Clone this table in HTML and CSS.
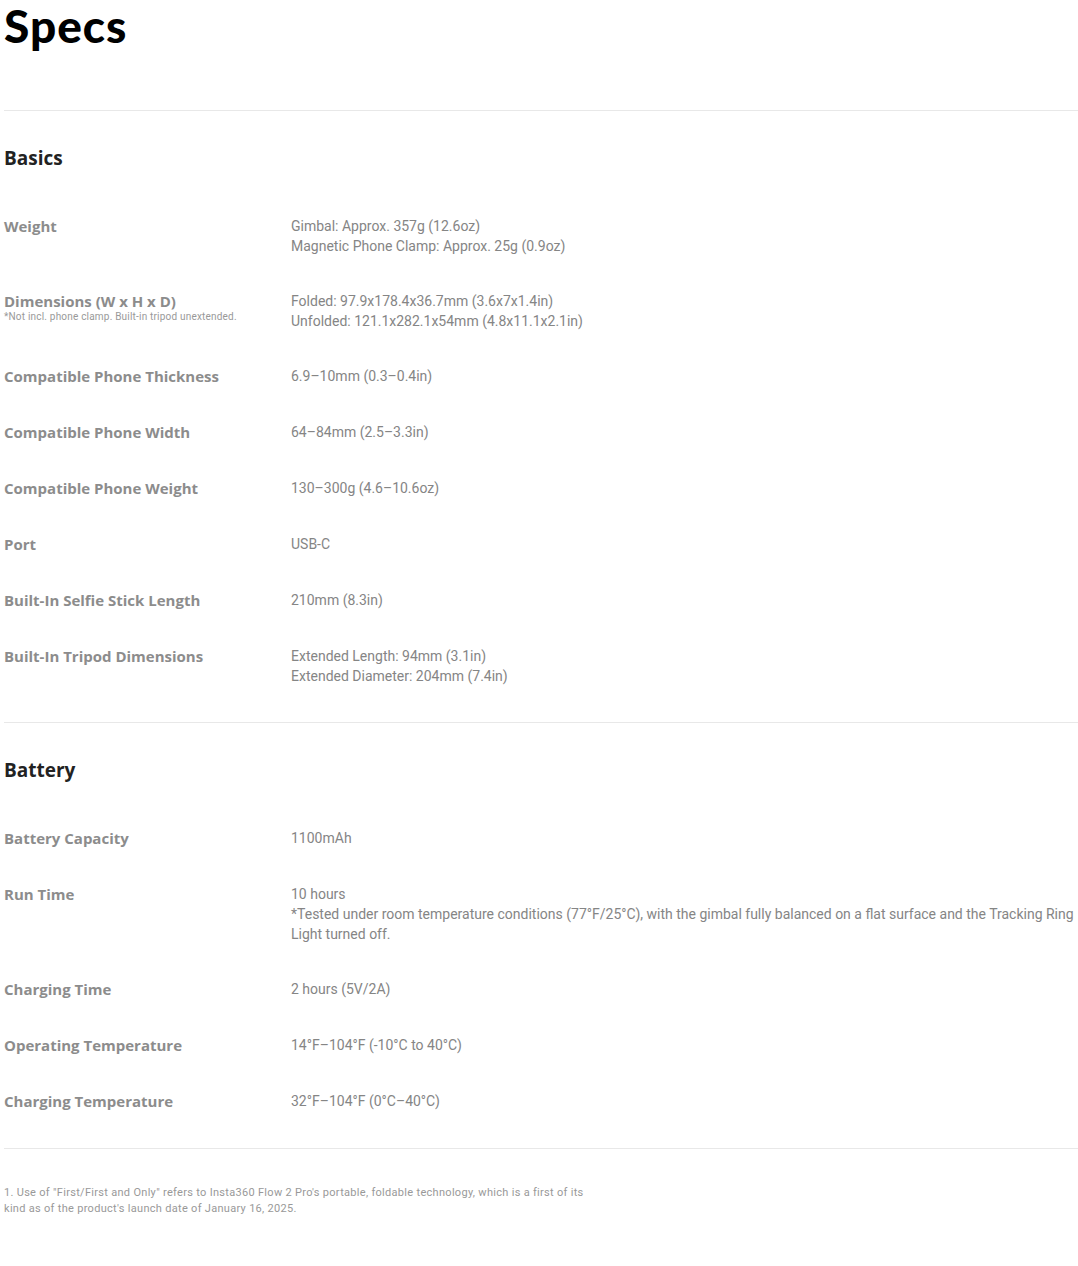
FILE: index.html
```html
<!DOCTYPE html>
<html lang="en">
<head>
  <meta charset="UTF-8">
  <meta name="viewport" content="width=device-width, initial-scale=1.0">
  <title>Specs</title>
  <link rel="stylesheet" href="styles.css">
</head>
<body>
  <div class="specs">
    <h1>Specs</h1>

    <div class="spec-section">
      <h3>Basics</h3>
      <div class="spec-row">
        <div class="spec-label">Weight</div>
        <div class="spec-value">Gimbal: Approx. 357g (12.6oz)<br>Magnetic Phone Clamp: Approx. 25g (0.9oz)</div>
      </div>
      <div class="spec-row">
        <div class="spec-label">Dimensions (W x H x D)<span class="note">*Not incl. phone clamp. Built-in tripod unextended.</span></div>
        <div class="spec-value">Folded: 97.9x178.4x36.7mm (3.6x7x1.4in)<br>Unfolded: 121.1x282.1x54mm (4.8x11.1x2.1in)</div>
      </div>
      <div class="spec-row">
        <div class="spec-label">Compatible Phone Thickness</div>
        <div class="spec-value">6.9–10mm (0.3–0.4in)</div>
      </div>
      <div class="spec-row">
        <div class="spec-label">Compatible Phone Width</div>
        <div class="spec-value">64–84mm (2.5–3.3in)</div>
      </div>
      <div class="spec-row">
        <div class="spec-label">Compatible Phone Weight</div>
        <div class="spec-value">130–300g (4.6–10.6oz)</div>
      </div>
      <div class="spec-row">
        <div class="spec-label">Port</div>
        <div class="spec-value">USB-C</div>
      </div>
      <div class="spec-row">
        <div class="spec-label">Built-In Selfie Stick Length</div>
        <div class="spec-value">210mm (8.3in)</div>
      </div>
      <div class="spec-row">
        <div class="spec-label">Built-In Tripod Dimensions</div>
        <div class="spec-value">Extended Length: 94mm (3.1in)<br>Extended Diameter: 204mm (7.4in)</div>
      </div>
    </div>

    <div class="spec-section">
      <h3>Battery</h3>
      <div class="spec-row">
        <div class="spec-label">Battery Capacity</div>
        <div class="spec-value">1100mAh</div>
      </div>
      <div class="spec-row">
        <div class="spec-label">Run Time</div>
        <div class="spec-value">10 hours<br>*Tested under room temperature conditions (77°F/25°C), with the gimbal fully balanced on a flat surface and the Tracking Ring Light turned off.</div>
      </div>
      <div class="spec-row">
        <div class="spec-label">Charging Time</div>
        <div class="spec-value">2 hours (5V/2A)</div>
      </div>
      <div class="spec-row">
        <div class="spec-label">Operating Temperature</div>
        <div class="spec-value">14°F–104°F (-10°C to 40°C)</div>
      </div>
      <div class="spec-row">
        <div class="spec-label">Charging Temperature</div>
        <div class="spec-value">32°F–104°F (0°C–40°C)</div>
      </div>
    </div>

    <div class="footnote">
      <p>1. Use of "First/First and Only" refers to Insta360 Flow 2 Pro's portable, foldable technology, which is a first of its kind as of the product's launch date of January 16, 2025.</p>
    </div>
  </div>
</body>
</html>
```

FILE: styles.css
```css
body {
  margin: 0;
  padding: 0;
  background-color: #fff;
  font-family: Roboto, Arial, sans-serif;
}
.specs {
  padding: 0 0 0 4px;
}
h1 {
  font-family: Lato, Arial, sans-serif;
  font-weight: 900;
  font-size: 46px;
  line-height: 52px;
  color: #000;
  margin: 0;
  padding: 0 0 58px 0;
  letter-spacing: 1px;
}
.spec-section {
  border-top: 1px solid #e8e8e8;
  padding: 35px 0 36px 0;
}
h3 {
  font-family: "Open Sans", Arial, sans-serif;
  font-weight: 700;
  font-size: 19px;
  line-height: 24px;
  color: #222;
  margin: 0 0 46px 0;
}
.spec-row {
  display: flex;
  margin-bottom: 35px;
}
.spec-row:last-child {
  margin-bottom: 0;
}
.spec-label {
  width: 287px;
  flex-shrink: 0;
  font-family: "Open Sans", Arial, sans-serif;
  font-weight: 700;
  font-size: 15px;
  line-height: 21px;
  color: #8c8c8c;
}
.note {
  display: block;
  font-family: Roboto, Arial, sans-serif;
  font-weight: 400;
  font-size: 10px;
  line-height: 10px;
  letter-spacing: 0.2px;
  color: #999;
}
.spec-value {
  font-size: 14px;
  line-height: 20px;
  color: #858585;
}
.footnote {
  border-top: 1px solid #e8e8e8;
  padding-top: 36px;
}
.footnote p {
  margin: 0;
  max-width: 600px;
  font-size: 11px;
  line-height: 16px;
  letter-spacing: 0.3px;
  color: #999;
}
```
